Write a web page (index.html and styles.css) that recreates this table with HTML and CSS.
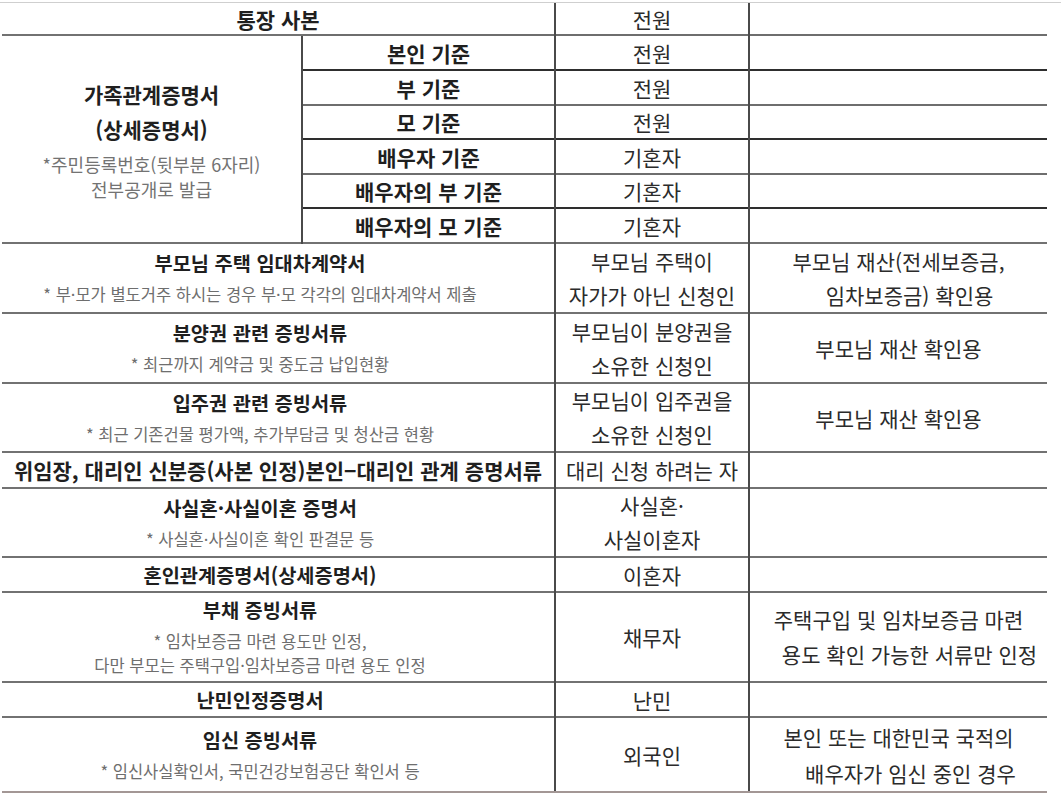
FILE: index.html
```html
<!DOCTYPE html>
<html lang="ko">
<head>
<meta charset="utf-8">
<title>제출 서류 목록</title>
<link rel="stylesheet" href="styles.css">
</head>
<body>
<div class="sheet">
<table class="docs">
  <colgroup>
    <col class="c1"><col class="c2"><col class="c3"><col class="c4">
  </colgroup>
  <tr class="h31">
    <td colspan="2" class="lead"><div class="cell"><span class="title">통장 사본</span></div></td>
    <td><div class="cell"><span class="who">전원</span></div></td>
    <td><div class="cell"></div></td>
  </tr>
  <tr class="h33">
    <td rowspan="6" class="lead">
      <div class="span">
        <div class="title t35">가족관계증명서</div>
        <div class="title t35">(상세증명서)</div>
        <div class="note big n25 gap">*주민등록번호(뒷부분 6자리)</div>
        <div class="note big n25">전부공개로 발급</div>
      </div>
    </td>
    <td class="dk"><div class="cell"><span class="title">본인 기준</span></div></td>
    <td class="dk"><div class="cell"><span class="who">전원</span></div></td>
    <td class="dk"><div class="cell"></div></td>
  </tr>
  <tr class="h33">
    <td class="dk2"><div class="cell"><span class="title">부 기준</span></div></td>
    <td class="dk2"><div class="cell"><span class="who">전원</span></div></td>
    <td class="dk2"><div class="cell"></div></td>
  </tr>
  <tr class="h32">
    <td class="dk"><div class="cell"><span class="title">모 기준</span></div></td>
    <td class="dk"><div class="cell"><span class="who">전원</span></div></td>
    <td class="dk"><div class="cell"></div></td>
  </tr>
  <tr class="h33">
    <td class="dk2"><div class="cell"><span class="title">배우자 기준</span></div></td>
    <td class="dk2"><div class="cell"><span class="who">기혼자</span></div></td>
    <td class="dk2"><div class="cell"></div></td>
  </tr>
  <tr class="h32">
    <td class="dk"><div class="cell"><span class="title">배우자의 부 기준</span></div></td>
    <td class="dk"><div class="cell"><span class="who">기혼자</span></div></td>
    <td class="dk"><div class="cell"></div></td>
  </tr>
  <tr class="h33">
    <td class="dk2"><div class="cell"><span class="title">배우자의 모 기준</span></div></td>
    <td class="dk2"><div class="cell"><span class="who">기혼자</span></div></td>
    <td class="dk2"><div class="cell"></div></td>
  </tr>
  <tr class="h68">
    <td colspan="2" class="lead">
      <div class="cell shift">
        <div class="title sm t32">부모님 주택 임대차계약서</div>
        <div class="note n30">* 부·모가 별도거주 하시는 경우 부·모 각각의 임대차계약서 제출</div>
      </div>
    </td>
    <td><div class="cell"><div class="who l34">부모님 주택이<br>자가가 아닌 신청인</div></div></td>
    <td><div class="cell"><div class="use l34">부모님 재산(전세보증금,<br><span class="ind">임차보증금) 확인용</span></div></div></td>
  </tr>
  <tr class="h68">
    <td colspan="2" class="lead">
      <div class="cell shift">
        <div class="title sm t32">분양권 관련 증빙서류</div>
        <div class="note n30">* 최근까지 계약금 및 중도금 납입현황</div>
      </div>
    </td>
    <td><div class="cell"><div class="who l34">부모님이 분양권을<br>소유한 신청인</div></div></td>
    <td><div class="cell"><div class="use">부모님 재산 확인용</div></div></td>
  </tr>
  <tr class="h67">
    <td colspan="2" class="lead">
      <div class="cell shift">
        <div class="title sm t32">입주권 관련 증빙서류</div>
        <div class="note n30">* 최근 기존건물 평가액, 추가부담금 및 청산금 현황</div>
      </div>
    </td>
    <td><div class="cell"><div class="who l33">부모님이 입주권을<br>소유한 신청인</div></div></td>
    <td><div class="cell"><div class="use">부모님 재산 확인용</div></div></td>
  </tr>
  <tr class="h34">
    <td colspan="2" class="lead"><div class="cell"><span class="title">위임장, 대리인 신분증(사본 인정)본인−대리인 관계 증명서류</span></div></td>
    <td><div class="cell"><span class="who">대리 신청 하려는 자</span></div></td>
    <td><div class="cell"></div></td>
  </tr>
  <tr class="h67">
    <td colspan="2" class="lead">
      <div class="cell shift">
        <div class="title sm t32">사실혼·사실이혼 증명서</div>
        <div class="note n30">* 사실혼·사실이혼 확인 판결문 등</div>
      </div>
    </td>
    <td><div class="cell"><div class="who l33">사실혼·<br>사실이혼자</div></div></td>
    <td><div class="cell"></div></td>
  </tr>
  <tr class="h33">
    <td colspan="2" class="lead"><div class="cell shift"><span class="title sm">혼인관계증명서(상세증명서)</span></div></td>
    <td><div class="cell"><span class="who">이혼자</span></div></td>
    <td><div class="cell"></div></td>
  </tr>
  <tr class="h88">
    <td colspan="2" class="lead">
      <div class="cell shift pb3">
        <div class="title sm t32">부채 증빙서류</div>
        <div class="note n24 gap3">* 임차보증금 마련 용도만 인정,</div>
        <div class="note n24">다만 부모는 주택구입·임차보증금 마련 용도 인정</div>
      </div>
    </td>
    <td><div class="cell"><span class="who">채무자</span></div></td>
    <td><div class="cell"><div class="use l35">주택구입 및 임차보증금 마련<br><span class="ind">용도 확인 가능한 서류만 인정</span></div></div></td>
  </tr>
  <tr class="h33">
    <td colspan="2" class="lead"><div class="cell shift"><span class="title sm">난민인정증명서</span></div></td>
    <td><div class="cell"><span class="who">난민</span></div></td>
    <td><div class="cell"></div></td>
  </tr>
  <tr class="h73 last">
    <td colspan="2" class="lead">
      <div class="cell shift">
        <div class="title sm t32">임신 증빙서류</div>
        <div class="note n30">* 임신사실확인서, 국민건강보험공단 확인서 등</div>
      </div>
    </td>
    <td><div class="cell"><span class="who">외국인</span></div></td>
    <td><div class="cell"><div class="use l36">본인 또는 대한민국 국적의<br><span class="ind wide">배우자가 임신 중인 경우</span></div></div></td>
  </tr>
</table>
</div>
</body>
</html>
```

FILE: styles.css
```css
html, body {
  margin: 0;
  padding: 0;
  background: #ffffff;
}

body {
  font-family: "Noto Sans CJK KR", "Noto Sans", sans-serif;
  color: #222222;
}

.sheet {
  margin-top: 2px;
  border-top: 1px solid #cfcfcf;
}

.docs {
  margin-left: 2px;
  width: 1045px;
  table-layout: fixed;
  border-collapse: collapse;
}

.c1 { width: 300px; }
.c2 { width: 253px; }
.c3 { width: 194px; }
.c4 { width: 298px; }

.docs td {
  padding: 0;
  text-align: center;
  vertical-align: middle;
  border-top: 2px solid #727272;
  border-left: 2px solid #4a4a4a;
  white-space: nowrap;
}

.docs tr:first-child td {
  border-top: none;
}

.docs td.lead {
  border-left: none;
}

.docs td.dk {
  border-top-color: #6e6e6e;
}

.docs td.dk2 {
  border-top-color: #2e2e2e;
}

.docs tr.last td {
  border-bottom: 2px solid #a39795;
}

.cell {
  box-sizing: border-box;
  display: flex;
  flex-direction: column;
  justify-content: center;
  align-items: center;
  overflow: hidden;
}

.cell.shift {
  padding-right: 36px;
}

.span {
  display: flex;
  flex-direction: column;
  align-items: center;
}

.h31 .cell { height: 31px; }
.h32 .cell { height: 32px; }
.h33 .cell { height: 33px; }
.h34 .cell { height: 34px; }
.h67 .cell { height: 67px; }
.h68 .cell { height: 68px; }
.h73 .cell { height: 73px; }
.h88 .cell { height: 88px; }

.cell.pb3 {
  padding-bottom: 3px;
}

.title {
  font-weight: 700;
  font-size: 21px;
  line-height: 30px;
  color: #1f1f1f;
}

.title.sm {
  font-size: 19.75px;
}

.t35 { line-height: 35px; }
.t32 { line-height: 32px; }

.note {
  font-size: 16.5px;
  color: #6e6e6e;
}

.note.big {
  font-size: 18px;
  color: #737373;
}

.note.gap {
  margin-top: 5px;
}

.note.gap3 {
  margin-top: 3px;
}

.n25 { line-height: 25px; }
.n30 { line-height: 30px; }
.n24 { line-height: 24px; }

.who, .use {
  font-size: 21px;
  line-height: 30px;
  color: #2b2b2b;
}

.l33 { line-height: 33.5px; }
.l34 { line-height: 34px; }
.l35 { line-height: 35px; }
.l36 { line-height: 36px; }

.ind {
  display: inline-block;
  padding-left: 22px;
}

.ind.wide {
  padding-left: 24px;
}
```
